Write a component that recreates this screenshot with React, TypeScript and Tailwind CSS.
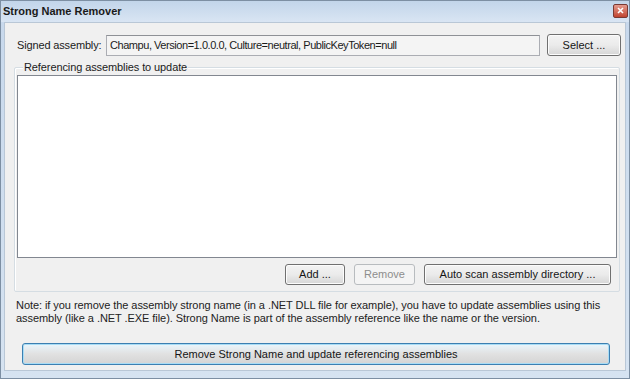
import React from "react";

const font = { fontFamily: '"Liberation Sans", Arial, sans-serif' };

function Btn({
  children,
  className = "",
  disabled = false,
}: {
  children: React.ReactNode;
  className?: string;
  disabled?: boolean;
}) {
  return (
    <div
      className={
        "flex items-center justify-center rounded-[3px] border text-[11px] " +
        (disabled
          ? "border-[#b8bcbf] bg-[#f4f4f4] text-[#8d8d8d] "
          : "border-[#707070] bg-gradient-to-b from-[#f3f3f3] via-[#ebebeb] to-[#d6d6d6] text-[#151515] shadow-[inset_0_0_0_1px_#fcfcfc] ") +
        className
      }
    >
      {children}
    </div>
  );
}

export default function App() {
  return (
    <div
      className="w-[630px] h-[379px] flex flex-col bg-gradient-to-b from-[#c7d8ec] to-[#d6e3f1] border border-[#7d8fa3] overflow-hidden"
      style={font}
    >
      {/* title bar */}
      <div className="h-[21px] flex items-center justify-between pl-[2px] pr-[1px] bg-gradient-to-b from-[#c2d5ea] to-[#d9e5f3]">
        <span className="text-[11px] font-bold text-[#1a1a1a]">Strong Name Remover</span>
        <div className="w-[15px] h-[14px] mt-[-2px] rounded-[2px] border border-[#7a3a33] bg-gradient-to-b from-[#e39a8e] to-[#c0432f] flex items-center justify-center">
          <svg width="7" height="7" viewBox="0 0 7 7">
            <path d="M1 1 L6 6 M6 1 L1 6" stroke="#ffffff" strokeWidth="1.6" />
          </svg>
        </div>
      </div>
      {/* body */}
      <div className="flex-1 mx-[3px] mb-[7px] bg-[#f0f0f0] border border-[#b9c7d6] flex flex-col text-[11px] text-[#1b1b1b]">
        {/* signed assembly row */}
        <div className="flex items-center mt-[11px] ml-[12px] mr-[4px] h-[22px]">
          <span className="w-[89px] tracking-[-0.15px]">Signed assembly:</span>
          <div className="w-[434px] h-[21px] border border-[#abadb3] border-t-[#8e9196] bg-[#f4f4f4] flex items-center pl-[3px] tracking-[-0.45px]">
            Champu, Version=1.0.0.0, Culture=neutral, PublicKeyToken=null
          </div>
          <Btn className="ml-[7px] w-[74px] h-[22px]">Select ...</Btn>
        </div>
        {/* group box */}
        <div className="relative mt-[11px] ml-[9px] mr-[5px] h-[225px] border border-[#d5dde3] rounded-[2px] shadow-[inset_1px_1px_0_#ffffff] flex flex-col">
          <span className="absolute left-[8px] top-[-8px] px-[1px] bg-[#f0f0f0] leading-[14px] tracking-[-0.1px]">
            Referencing assemblies to update
          </span>
          <div className="mt-[7px] mx-[2px] h-[183px] bg-white border border-[#828790]" />
          <div className="flex justify-end mt-[6px] mr-[8px] gap-[9px]">
            <Btn className="w-[60px] h-[21px]">Add ...</Btn>
            <Btn disabled className="w-[61px] h-[21px]">Remove</Btn>
            <Btn className="w-[187px] h-[21px]">Auto scan assembly directory ...</Btn>
          </div>
        </div>
        {/* note */}
        <div className="mt-[7px] ml-[11px] leading-[13px] text-[#222] tracking-[-0.06px]">
          <div>Note: if you remove the assembly strong name (in a .NET DLL file for example), you have to update assemblies using this</div>
          <div>assembly (like a .NET .EXE file). Strong Name is part of the assembly reference like the name or the version.</div>
        </div>
        {/* bottom button */}
        <div className="mt-[18px] ml-[17px] w-[588px] h-[22px] rounded-[3px] border border-[#3c7fb1] bg-gradient-to-b from-[#eaf6fd] via-[#e1e1e1] to-[#d4d4d4] shadow-[inset_0_0_0_1px_#a8dcf5] flex items-center justify-center text-[#151515]">
          Remove Strong Name and update referencing assemblies
        </div>
      </div>
    </div>
  );
}
